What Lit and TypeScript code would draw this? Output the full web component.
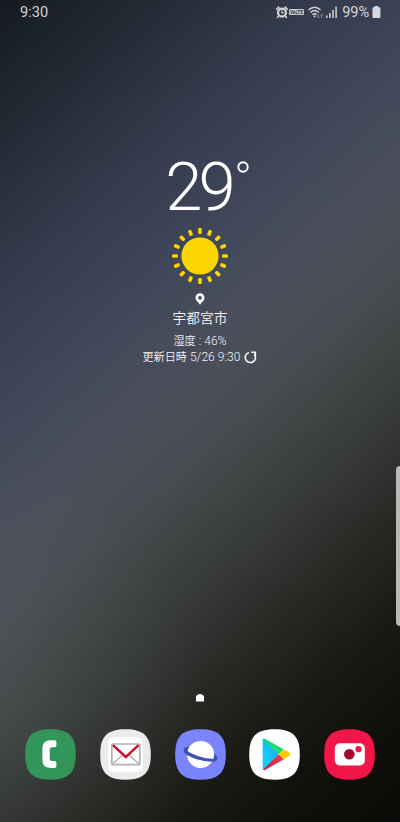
import { LitElement, html, svg, css } from "lit";
import { customElement } from "lit/decorators.js";

const SQUIRCLE =
  "M25.5 .3C43.8 .3 50.8 7.3 50.8 25.5S43.8 50.7 25.5 50.7 .2 43.7 .2 25.5 7.2 .3 25.5 .3Z";

@customElement("status-bar")
class StatusBar extends LitElement {
  static styles = css`
    :host {
      display: flex;
      align-items: center;
      justify-content: space-between;
      height: 24px;
      padding: 0 19px 0 20px;
      color: #d2d4d6;
      font: 14.6px/24px Roboto, "Noto Sans", sans-serif;
    }
    .clock { letter-spacing: 0.05px; }
    .right { display: flex; align-items: center; }
    svg { display: block; flex: none; }
    .percent { margin: 0 3px 0 5px; letter-spacing: -0.1px; font-size: 14.6px; }
    .volte { margin-left: 1px; }
    .volte text { font: bold 5px Roboto, sans-serif; }
    .wifi { margin-left: 4px; }
    .signal { margin-left: 2px; }
  `;

  render() {
    return html`
      <span class="clock">9:30</span>
      <div class="right">
        <svg width="12" height="13" viewBox="0 0 12 13">
          <path d="M.8 3.2L2.8 1.2M11.2 3.2L9.2 1.2" stroke="#d2d4d6" stroke-width="1.7" stroke-linecap="round" />
          <path d="M2.4 10.3L1.2 11.9M9.6 10.3L10.8 11.9" stroke="#d2d4d6" stroke-width="1.6" />
          <circle cx="6" cy="6.6" r="4" fill="none" stroke="#d2d4d6" stroke-width="2.2" />
          <path d="M6 4.2V7H8.2" fill="none" stroke="#d2d4d6" stroke-width="1.2" />
        </svg>
        <svg class="volte" width="15" height="6" viewBox="0 0 15 6">
          <rect width="15" height="6" rx=".8" fill="#c3c6ca" />
          <text x=".9" y="4.8" fill="#343a47" textLength="13.2" lengthAdjust="spacingAndGlyphs">VoLTE</text>
        </svg>
        <svg class="wifi" width="16" height="13" viewBox="0 0 16 13">
          <g fill="none" stroke="#d2d4d6" stroke-width="1.4">
            <path d="M.5 4Q6.5-1.6 12.6 4" />
            <path d="M2.4 6.4Q6.5 2.6 10.7 6.4" />
            <path d="M4.4 8.7Q6.5 6.8 8.7 8.7" />
          </g>
          <path d="M5.2 9.9Q6.5 8.9 7.9 9.9L6.5 11.6Z" fill="#d2d4d6" />
          <path d="M10.4 8.3V12M9.2 10.6L10.4 12L11.6 10.6M13.8 12V8.3M12.6 9.7L13.8 8.3L15 9.7" fill="none" stroke="#858a94" stroke-width=".9" />
        </svg>
        <svg class="signal" width="11" height="12" viewBox="0 0 11 12">
          <path d="M0 9.5H1.6V12H0ZM3.1 7H4.7V12H3.1ZM6.2 4H7.8V12H6.2ZM9.3 .5H10.9V12H9.3Z" fill="#c6c8cc" />
        </svg>
        <span class="percent">99%</span>
        <svg width="9" height="12" viewBox="0 0 9 12">
          <path d="M2.6 0H6.4V1.3H7.4Q8.4 1.3 8.4 2.3V11Q8.4 12 7.4 12H1.5Q.5 12 .5 11V2.3Q.5 1.3 1.5 1.3H2.6Z" fill="#d6d8da" />
        </svg>
      </div>
    `;
  }
}

@customElement("weather-widget")
class WeatherWidget extends LitElement {
  static styles = css`
    :host {
      display: flex;
      flex-direction: column;
      align-items: center;
      color: #f4f4f5;
      font-family: Roboto, "Noto Sans CJK JP", sans-serif;
    }
    svg { display: block; flex: none; }
    .temp {
      display: flex;
      align-items: flex-start;
      height: 56px;
      margin-left: 14px;
      color: #fff;
    }
    .value {
      font-size: 67px;
      line-height: 57px;
      font-weight: 300;
      letter-spacing: -3.8px;
    }
    .degree { margin-top: 2px; margin-left: 5px; }
    .sun { margin-top: 12px; }
    .pin { margin-top: 8px; }
    .city { margin-top: 3px; font-size: 13.7px; line-height: 20px; font-weight: 350; }
    .line {
      display: flex;
      align-items: center;
      font-size: 11.1px;
      line-height: 16px;
      height: 16px;
      font-weight: 350;
    }
    .latin { font-size: 12px; letter-spacing: 0.05px; }
    .humidity { margin-top: 5px; }
    .refresh { margin-left: 4px; }
  `;

  render() {
    const rays = Array.from({ length: 16 }, (_, i) => i * 22.5);
    return html`
      <div class="temp">
        <span class="value">29</span>
        <svg class="degree" width="12" height="12" viewBox="0 0 12 12">
          <circle cx="6" cy="6" r="4.7" fill="none" stroke="#fff" stroke-width="1.9" />
        </svg>
      </div>
      <svg class="sun" width="58" height="58" viewBox="-29 -29 58 58">
        <circle r="18.6" fill="#fbd500" />
        ${rays.map(
          (a) => svg`<rect x="-1.8" y="-28" width="3.6" height="6" rx="1.3" fill="#fbd500" transform=${`rotate(${a})`} />`
        )}
      </svg>
      <svg class="pin" width="10" height="12" viewBox="0 0 10 12">
        <path fill-rule="evenodd" fill="#fff" d="M5 .3A4.5 4.5 0 0 1 9.5 4.8C9.5 7.5 6.8 9 5 11.8C3.2 9 .5 7.5 .5 4.8A4.5 4.5 0 0 1 5 .3ZM5 2.9A1.9 1.9 0 1 0 5 6.7A1.9 1.9 0 1 0 5 2.9Z" />
      </svg>
      <div class="city">宇都宮市</div>
      <div class="line humidity"><span>湿度<span class="latin"> : 46%</span></span></div>
      <div class="line">
        <span>更新日時<span class="latin"> 5/26 9:30</span></span>
        <svg class="refresh" width="13" height="13" viewBox="0 0 13 13">
          <path d="M5 1.5A5.1 5.1 0 1 0 10.3 3.2" fill="none" stroke="#f4f4f5" stroke-width="1.6" />
          <path d="M7.3 .6H12.1V5.2H10.6V3.2L9.6 2.1H7.3Z" fill="#f4f4f5" />
        </svg>
      </div>
    `;
  }
}

@customElement("app-dock")
class AppDock extends LitElement {
  static styles = css`
    :host {
      display: flex;
      justify-content: space-between;
      padding: 0 25px;
    }
    svg { display: block; flex: none; }
  `;

  private icon(fill: string, content: unknown) {
    return html`<svg width="51" height="51" viewBox="0 0 51 51"><path d=${SQUIRCLE} fill=${fill} />${content}</svg>`;
  }

  render() {
    return html`
      ${this.icon("#33955a", svg`
        <path fill="#fff" d="M25.7 11.2H29.4Q31.4 11.2 31.4 13.2V16.2Q31.4 18.2 29.4 18.2H27.2Q24.7 18.2 24.7 20.7V29.4Q24.7 31.9 27.2 31.9H29.4Q31.4 31.9 31.4 33.9V36.9Q31.4 38.9 29.4 38.9H25.7Q17.4 38.9 17.4 30.6V19.5Q17.4 11.2 25.7 11.2Z" />
      `)}
      ${this.icon("#ebebeb", svg`
        <rect x="8.2" y="8.3" width="34.6" height="34.4" rx="6" fill="#fff" />
        <rect x="11.8" y="15" width="28" height="20.6" rx=".8" fill="#fff" stroke="#b2b2b5" stroke-width="1.7" />
        <path d="M12 35.3L22.4 26.2M39.6 35.3L29.2 26.2" stroke="#b2b2b5" stroke-width="1.4" />
        <path d="M12.9 16.2L25.8 28L38.6 16.2" fill="none" stroke="#c8102f" stroke-width="2.4" />
      `)}
      ${this.icon("#7a84fc", svg`
        <ellipse cx="25.6" cy="25.2" rx="17.4" ry="6.4" fill="#4052b2" transform="rotate(16 25.6 25.2)" />
        <circle cx="25.6" cy="25.4" r="13.5" fill="#fff" />
        <path fill="#4052b2" d="M8.9 20.4C8.4 22.6 10.4 25.4 16 28C23.5 31.4 35 33.6 40 32.3C42.6 31.5 43 30 41.6 27.6C41.6 29.4 40.2 30 37 29.7C30.5 29.5 22 27 16.3 24.2C12 22.1 11 20.3 12.4 19.2C10.4 18.8 9.2 19.2 8.9 20.4Z" />
      `)}
      ${this.icon("#fff", svg`
        <defs>
          <linearGradient id="blue" x1="1" y1="0" x2="0" y2="1">
            <stop offset="0" stop-color="#18a8ee" />
            <stop offset=".5" stop-color="#12c2f4" />
            <stop offset="1" stop-color="#1bd0f8" />
          </linearGradient>
          <linearGradient id="red" x1="1" y1="0" x2="0" y2="1">
            <stop offset="0" stop-color="#f8384a" />
            <stop offset="1" stop-color="#c61e4b" />
          </linearGradient>
        </defs>
        <path fill="url(#blue)" d="M13.6 11Q13.6 9.4 15 9.8L29.6 25.3L15 41Q13.6 41.4 13.6 39.8Z" />
        <path fill="#1ddd70" d="M14.6 9.4Q15.3 9.3 16 9.7L34.6 20.2L29.6 25.3L14.2 10Z" />
        <path fill="#ffcb05" d="M34.6 20.2L40.7 23.8Q42.5 25.3 40.7 26.8L34.6 30.4L29.6 25.3Z" />
        <path fill="url(#red)" d="M14.2 40.6L29.6 25.3L34.6 30.4L16 41Q15 41.5 14.2 40.6Z" />
      `)}
      ${this.icon("#f11648", svg`
        <rect x="10.8" y="14.2" width="30" height="22.2" rx="5" fill="#fff" />
        <circle cx="25.3" cy="25.2" r="5.3" fill="#a5062c" />
        <circle cx="34.5" cy="20.2" r="3.1" fill="#f11648" />
      `)}
    `;
  }
}

@customElement("app-root")
class AppRoot extends LitElement {
  static styles = css`
    :host {
      display: flex;
      flex-direction: column;
      box-sizing: border-box;
      position: relative;
      width: 400px;
      height: 822px;
      padding-bottom: 42px;
      overflow: hidden;
      background:
        radial-gradient(ellipse 210px 230px at 0 700px, rgba(110, 122, 124, 0.17), rgba(110, 122, 124, 0)),
        linear-gradient(
          138deg,
          #151a20 0%,
          #1d242c 7%,
          #2b313e 17%,
          #363c4e 25%,
          #3e4458 33%,
          #474c5b 41%,
          #4b4f5a 47%,
          #474d52 53%,
          #3f4444 59%,
          #353836 66%,
          #272824 74%,
          #1a1a15 82%,
          #100f0b 91%,
          #0b0a08 100%
        );
    }
    weather-widget { margin-top: 135px; }
    .home { display: block; margin: auto auto 27px; }
    .edge {
      position: absolute;
      right: 0;
      top: 466px;
      width: 4px;
      height: 160px;
      border-radius: 4px 0 0 4px;
      background: #b9b9b8;
    }
  `;

  render() {
    return html`
      <status-bar></status-bar>
      <weather-widget></weather-widget>
      <svg class="home" width="8" height="8" viewBox="0 0 8 8">
        <path d="M0 2.6Q0 2 .6 1.6L2.6 .3Q4-.3 5.4 .3L7.4 1.6Q8 2 8 2.6V7.4H0Z" fill="#fff" />
      </svg>
      <app-dock></app-dock>
      <div class="edge"></div>
    `;
  }
}
